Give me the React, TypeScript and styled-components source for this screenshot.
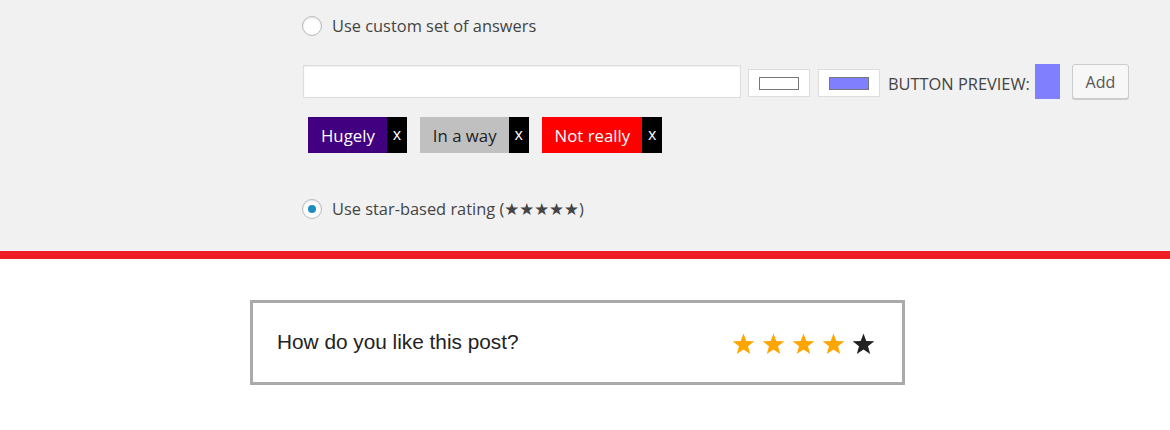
import React from "react";
import styled, { createGlobalStyle } from "styled-components";

const GlobalStyle = createGlobalStyle`
  html, body { margin: 0; padding: 0; background: #ffffff; }
  body { width: 1170px; height: 430px; overflow: hidden; }
  * { box-sizing: border-box; }
`;

const AdminPanel = styled.section`
  height: 251px;
  background: #f1f1f1;
  padding: 16px 0 0 302px;
  display: flex;
  flex-direction: column;
  font-family: "Open Sans", "Noto Sans", sans-serif;
  color: #444;
`;

const RadioRow = styled.label<{ $top: number }>`
  display: flex;
  align-items: center;
  gap: 10px;
  margin-top: ${(p) => p.$top}px;
  font-size: 16.4px;
  line-height: 20px;
  height: 20px;
`;

const StarGlyphs = styled.span`
  font-family: "DejaVu Sans", sans-serif;
  font-size: 16.7px;
`;

const RadioCircle = styled.span<{ $checked?: boolean }>`
  width: 20px;
  height: 20px;
  border-radius: 50%;
  border: 1px solid #b4b9be;
  background: #fff;
  box-shadow: inset 0 1px 2px rgba(0, 0, 0, 0.1);
  display: flex;
  align-items: center;
  justify-content: center;
  &::after {
    content: "";
    display: ${(p) => (p.$checked ? "block" : "none")};
    width: 8px;
    height: 8px;
    border-radius: 50%;
    background: #1e8cbe;
  }
`;

const ControlRow = styled.div`
  display: flex;
  align-items: center;
  margin-top: 28px;
  height: 35px;
`;

const TextInput = styled.div`
  width: 438px;
  height: 33px;
  margin-left: 1px;
  background: #fff;
  border: 1px solid #ddd;
  box-shadow: inset 0 1px 2px rgba(0, 0, 0, 0.07);
`;

const ColorBox = styled.div<{ $gap: number }>`
  width: 62px;
  height: 28px;
  margin-left: ${(p) => p.$gap}px;
  margin-top: 3px;
  background: #fff;
  border: 1px solid #ddd;
  display: flex;
  align-items: center;
  justify-content: center;
`;

const Swatch = styled.span<{ $color: string }>`
  width: 40px;
  height: 13px;
  background: ${(p) => p.$color};
  border: 1px solid #777;
`;

const PreviewLabel = styled.span`
  margin-left: 8px;
  font-size: 16.4px;
  color: #444;
  margin-top: 3px;
`;

const PreviewButton = styled.span`
  width: 25px;
  height: 35px;
  margin-left: 5px;
  background: #8080ff;
`;

const AddButton = styled.button`
  margin-left: 12px;
  width: 57px;
  height: 35px;
  border: 1px solid #ccc;
  border-radius: 3px;
  background: #f7f7f7;
  box-shadow: 0 1px 0 #ccc;
  color: #555;
  font-family: "Open Sans", "Noto Sans", sans-serif;
  font-size: 16px;
  padding: 0;
`;

const TagRow = styled.div`
  display: flex;
  gap: 13px;
  margin-top: 18px;
  padding-left: 6px;
  height: 36px;
`;

const Tag = styled.div`
  display: flex;
  height: 36px;
`;

const TagLabel = styled.span<{ $bg: string; $fg: string }>`
  display: flex;
  align-items: center;
  padding: 0 12px 0 13px;
  background: ${(p) => p.$bg};
  color: ${(p) => p.$fg};
  font-size: 16.8px;
`;

const TagRemove = styled.span`
  width: 20px;
  display: flex;
  align-items: center;
  justify-content: center;
  background: #000;
  color: #fff;
  font-size: 16px;
  padding-bottom: 2px;
`;

const RedBar = styled.div`
  height: 8px;
  background: #ee1c24;
`;

const Front = styled.section`
  padding: 41px 0 0 250px;
`;

const RatingBox = styled.div`
  width: 655px;
  height: 85px;
  border: 3px solid #aaa;
  display: flex;
  align-items: center;
  justify-content: space-between;
  padding: 0 27px 0 24px;
`;

const Question = styled.span`
  font-family: "Liberation Sans", Arial, sans-serif;
  font-size: 20.8px;
  color: #222;
  margin-top: -2px;
`;

const Stars = styled.div`
  display: flex;
  gap: 7px;
  margin-top: 2px;
`;

const Star = ({ color }: { color: string }) => (
  <svg width="23" height="22" viewBox="0 0 24 23">
    <path
      d="M12 0.5 L14.9 8.3 L23.3 8.6 L16.7 13.8 L19 21.9 L12 17.2 L5 21.9 L7.3 13.8 L0.7 8.6 L9.1 8.3 Z"
      fill={color}
    />
  </svg>
);

const tags = [
  { label: "Hugely", bg: "#400080", fg: "#fff" },
  { label: "In a way", bg: "#c0c0c0", fg: "#222" },
  { label: "Not really", bg: "#ff0000", fg: "#fff" },
];

export default function App() {
  return (
    <>
      <GlobalStyle />
      <AdminPanel>
        <RadioRow $top={0}>
          <RadioCircle />
          <span>Use custom set of answers</span>
        </RadioRow>
        <ControlRow>
          <TextInput />
          <ColorBox $gap={7}>
            <Swatch $color="#ffffff" />
          </ColorBox>
          <ColorBox $gap={8}>
            <Swatch $color="#8080ff" />
          </ColorBox>
          <PreviewLabel>BUTTON PREVIEW:</PreviewLabel>
          <PreviewButton />
          <AddButton>Add</AddButton>
        </ControlRow>
        <TagRow>
          {tags.map((t) => (
            <Tag key={t.label}>
              <TagLabel $bg={t.bg} $fg={t.fg}>
                {t.label}
              </TagLabel>
              <TagRemove>x</TagRemove>
            </Tag>
          ))}
        </TagRow>
        <RadioRow $top={46}>
          <RadioCircle $checked />
          <span>
            Use star-based rating (<StarGlyphs>★★★★★</StarGlyphs>)
          </span>
        </RadioRow>
      </AdminPanel>
      <RedBar />
      <Front>
        <RatingBox>
          <Question>How do you like this post?</Question>
          <Stars>
            <Star color="#ffa500" />
            <Star color="#ffa500" />
            <Star color="#ffa500" />
            <Star color="#ffa500" />
            <Star color="#222222" />
          </Stars>
        </RatingBox>
      </Front>
    </>
  );
}
